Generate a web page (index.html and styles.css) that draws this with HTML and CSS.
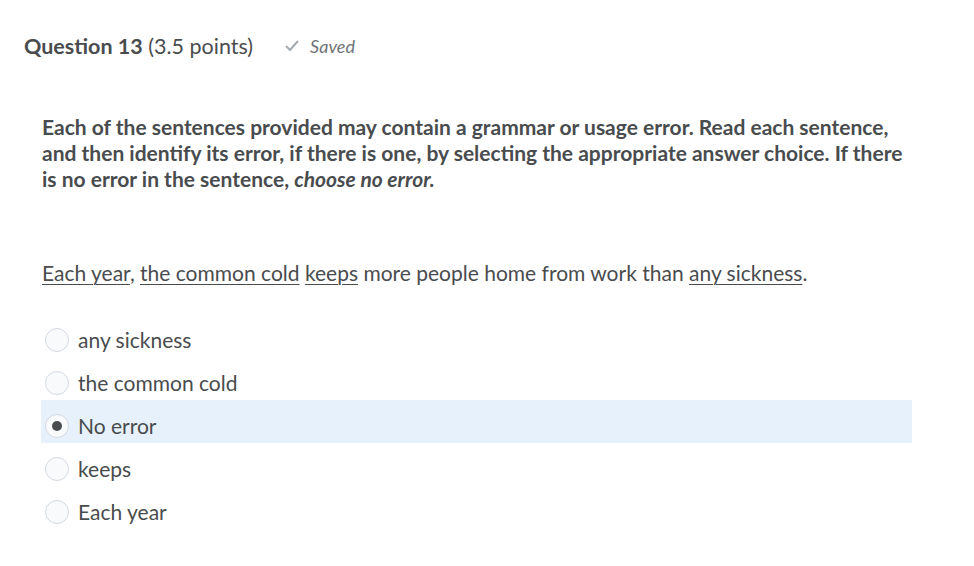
FILE: index.html
```html
<!DOCTYPE html>
<html>
<head>
<meta charset="utf-8">
<link rel="stylesheet" href="styles.css">
</head>
<body>
<div class="page">
  <div class="qhead">
    <span class="qtitle"><b>Question 13</b> (3.5 points)</span>
    <span class="saved">
      <svg class="check" width="16" height="16" viewBox="0 0 16 16"><path d="M2.5 8.5 L6 12 L13.5 3.5" fill="none" stroke="#a4aab0" stroke-width="2" stroke-linecap="round" stroke-linejoin="round"/></svg>
      <i>Saved</i>
    </span>
  </div>
  <div class="body">
    <p class="instr">Each of the sentences provided may contain a grammar or usage error. Read each sentence, and then identify its error, if there is one, by selecting the appropriate answer choice. If there is no error in the sentence, <i>choose no error.</i></p>
    <p class="sentence"><u>Each year</u>, <u>the common cold</u> <u>keeps</u> more people home from work than <u>any sickness</u>.</p>
    <div class="options">
      <label class="opt"><span class="radio"></span><span class="lbl">any sickness</span></label>
      <label class="opt"><span class="radio"></span><span class="lbl">the common cold</span></label>
      <label class="opt selected"><span class="radio"><span class="dot"></span></span><span class="lbl">No error</span></label>
      <label class="opt"><span class="radio"></span><span class="lbl">keeps</span></label>
      <label class="opt"><span class="radio"></span><span class="lbl">Each year</span></label>
    </div>
  </div>
</div>
</body>
</html>
```
FILE: styles.css
```css
html, body {
  margin: 0;
  padding: 0;
  background: #ffffff;
}
body {
  font-family: Lato, "Noto Sans", sans-serif;
  color: #494c4e;
}
.page {
  padding: 32px 0 0 24px;
}
.qhead {
  display: flex;
  align-items: center;
  height: 28px;
}
.qtitle {
  font-size: 21.5px;
  color: #494c4e;
}
.qtitle b {
  font-weight: 700;
}
.saved {
  display: flex;
  align-items: center;
  margin-left: 31px;
  font-size: 18px;
  color: #6e7376;
  gap: 10px;
}
.body {
  padding-left: 18px;
  width: 880px;
}
.instr {
  margin: 54px 0 0 0;
  font-size: 21px;
  font-weight: 700;
  line-height: 26px;
  width: 870px;
}
.sentence {
  margin: 68px 0 0 0;
  font-size: 21px;
  line-height: 26px;
}
.sentence u {
  text-decoration-thickness: 1px;
  text-underline-offset: 3px;
}
.options {
  margin-top: 28px;
  display: flex;
  flex-direction: column;
  width: 870px;
}
.opt {
  display: flex;
  align-items: center;
  box-sizing: border-box;
  height: 43px;
  padding-top: 8px;
  margin-left: -1px;
  padding-left: 4px;
  font-size: 21px;
}
.opt.selected {
  background: #e6f1fb;
}
.radio {
  width: 24px;
  height: 24px;
  box-sizing: border-box;
  border: 1px solid #d3d9e3;
  border-radius: 50%;
  background: #f9fafb;
  display: flex;
  align-items: center;
  justify-content: center;
  margin-right: 9px;
}
.dot {
  width: 10px;
  height: 10px;
  border-radius: 50%;
  background: #494c4e;
}
```
